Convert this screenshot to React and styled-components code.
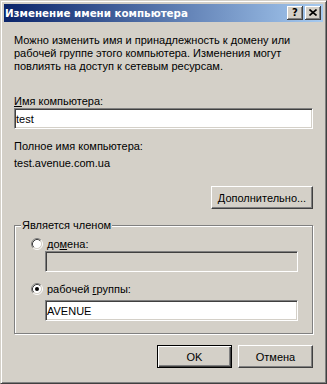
import React from 'react'
import styled, { createGlobalStyle } from 'styled-components'

const GlobalStyle = createGlobalStyle`
  html, body {
    margin: 0;
    padding: 0;
    background: #d4d0c8;
  }
  body {
    font-family: "Liberation Sans", Arial, sans-serif;
    font-size: 11px;
    color: #000;
  }
`

const Window = styled.div`
  box-sizing: border-box;
  width: 327px;
  height: 384px;
  background: #d4d0c8;
  border: 1px solid;
  border-color: #d4d0c8 #404040 #404040 #d4d0c8;
  box-shadow: inset 1px 1px 0 #fff, inset -1px -1px 0 #808080;
  padding: 3px;
  display: flex;
  flex-direction: column;
`

const TitleBar = styled.div`
  height: 18px;
  display: flex;
  align-items: center;
  gap: 2px;
  padding: 0 2px 0 1px;
  background: linear-gradient(to right, #0a246a, #a6caf0);
`

const Title = styled.div`
  flex: 1;
  color: #fff;
  font-family: "DejaVu Sans", Tahoma, sans-serif;
  font-weight: bold;
  font-size: 10.3px;
  white-space: nowrap;
`

const TitleButton = styled.div`
  box-sizing: border-box;
  width: 16px;
  height: 14px;
  background: #d4d0c8;
  box-shadow: inset -1px -1px 0 #404040, inset 1px 1px 0 #fff, inset -2px -2px 0 #808080;
  display: flex;
  align-items: center;
  justify-content: center;
  font-family: "DejaVu Sans", Tahoma, sans-serif;
  font-weight: bold;
  font-size: 10px;
  line-height: 1;
  padding-bottom: 1px;
`

const Body = styled.div`
  display: flex;
  flex-direction: column;
  padding: 0 10px;
`

const Text = styled.div`
  line-height: 13px;
  margin-top: ${p => p.$mt || 0}px;
  white-space: ${p => (p.$wrap ? 'normal' : 'nowrap')};
`

const Key = styled.span`
  text-decoration: underline;
  text-underline-offset: 1px;
`

const Edit = styled.input`
  box-sizing: border-box;
  display: block;
  width: ${p => p.$w || 299}px;
  height: 21px;
  margin: ${p => p.$mt || 0}px 0 0 ${p => p.$ml || 0}px;
  padding: 0 1px;
  border: 1px solid;
  border-color: #808080 #fff #fff #808080;
  box-shadow: inset 1px 1px 0 #404040, inset -1px -1px 0 #d4d0c8;
  background: ${p => (p.disabled ? '#d4d0c8' : '#fff')};
  font-family: "Liberation Sans", Arial, sans-serif;
  font-size: 11px;
  color: #000;
  outline: none;
`

const Button = styled.button`
  box-sizing: border-box;
  width: ${p => p.$w || 75}px;
  height: 23px;
  padding: 0;
  background: #d4d0c8;
  font-family: "Liberation Sans", Arial, sans-serif;
  font-size: 11px;
  color: #000;
  border: 1px solid;
  border-color: ${p => (p.$default ? '#000' : '#fff #404040 #404040 #fff')};
  box-shadow: ${p =>
    p.$default
      ? 'inset 1px 1px 0 #fff, inset -1px -1px 0 #404040, inset -2px -2px 0 #808080'
      : 'inset -1px -1px 0 #808080'};
`

const ButtonRow = styled.div`
  display: flex;
  justify-content: flex-end;
  gap: 6px;
  margin-top: ${p => p.$mt || 0}px;
`

const Group = styled.fieldset`
  box-sizing: border-box;
  margin: 10px 0 0 0;
  min-width: 0;
  padding: 0 14px 12px 16px;
  border: 1px solid #808080;
  box-shadow: inset 1px 1px 0 #fff, 1px 1px 0 #fff;
  width: 299px;
`

const Legend = styled.legend`
  padding: 0 1px;
  margin-left: -10px;
  line-height: 13px;
  background: #d4d0c8;
`

const RadioRow = styled.div`
  display: flex;
  align-items: center;
  gap: 4px;
  height: 13px;
  margin-top: ${p => p.$mt || 0}px;
`

const Radio = ({ checked }) => (
  <svg width="12" height="12" viewBox="0 0 12 12">
    <circle cx="6" cy="6" r="4.5" fill="#fff" />
    <path d="M2.11 9.89 A5.5 5.5 0 0 1 9.89 2.11" fill="none" stroke="#808080" />
    <path d="M9.89 2.11 A5.5 5.5 0 0 1 2.11 9.89" fill="none" stroke="#fff" />
    <path d="M2.82 9.18 A4.5 4.5 0 0 1 9.18 2.82" fill="none" stroke="#404040" />
    <path d="M9.18 2.82 A4.5 4.5 0 0 1 2.82 9.18" fill="none" stroke="#d4d0c8" />
    {checked && <circle cx="6" cy="6" r="2" fill="#000" />}
  </svg>
)

const CloseGlyph = () => (
  <svg width="8" height="7" viewBox="0 0 8 7">
    <path d="M0.5 0.5 L7.5 6.5 M7.5 0.5 L0.5 6.5" stroke="#000" strokeWidth="1.6" />
  </svg>
)

export default function App() {
  return (
    <>
      <GlobalStyle />
      <Window>
        <TitleBar>
          <Title>Изменение имени компьютера</Title>
          <TitleButton>?</TitleButton>
          <TitleButton><CloseGlyph /></TitleButton>
        </TitleBar>
        <Body>
          <Text $mt={12} $wrap>
            Можно изменить имя и принадлежность к домену или рабочей группе этого компьютера. Изменения могут повлиять на доступ к сетевым ресурсам.
          </Text>
          <Text $mt={22}><Key>И</Key>мя компьютера:</Text>
          <Edit value="test" readOnly />
          <Text $mt={11}>Полное имя компьютера:</Text>
          <Text $mt={4}>test.avenue.com.ua</Text>
          <ButtonRow $mt={16}>
            <Button $w={102}><Key>Д</Key>ополнительно...</Button>
          </ButtonRow>
          <Group>
            <Legend>Является членом</Legend>
            <RadioRow $mt={5}>
              <Radio />
              <span>до<Key>м</Key>ена:</span>
            </RadioRow>
            <Edit $mt={1} $ml={14} $w={253} value="" disabled readOnly />
            <RadioRow $mt={10}>
              <Radio checked />
              <span>рабочей <Key>г</Key>руппы:</span>
            </RadioRow>
            <Edit $mt={5} $ml={14} $w={253} value="AVENUE" readOnly />
          </Group>
          <ButtonRow $mt={11}>
            <Button $default>OK</Button>
            <Button>Отмена</Button>
          </ButtonRow>
        </Body>
      </Window>
    </>
  )
}
